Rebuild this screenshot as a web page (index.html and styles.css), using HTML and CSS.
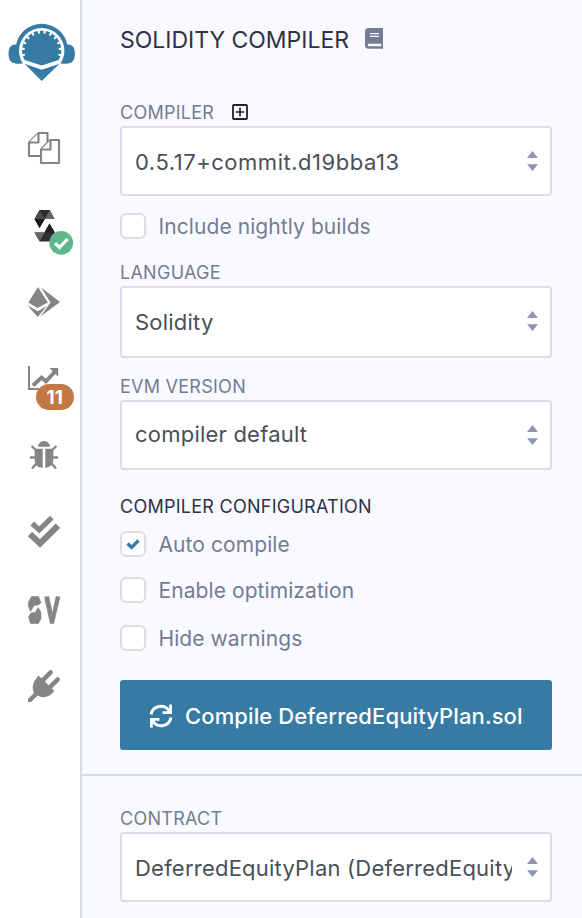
FILE: index.html
```html
<!DOCTYPE html>
<html lang="en">
<head>
<meta charset="utf-8">
<title>Solidity Compiler</title>
<link rel="stylesheet" href="styles.css">
</head>
<body>
<nav class="rail">
  <svg class="logo" viewBox="0 0 80 110">
    <path fill="#357ba3" d="M15.8 46A26.2 26.2 0 0 1 67.6 46V63.5H15.8z"/>
    <path fill="#357ba3" d="M20 44.5h-4.500q-7 0-7 9.300t7 9.700H21zM63.400 44.500h4.500q7 0 7 9.300t-7 9.700H62.400z"/>
    <circle cx="41.700" cy="50.700" r="22.700" fill="#fff"/>
    <path fill="#357ba3" d="M24.700 60A19.600 19.600 0 1 1 58.700 60L41.700 65.500z"/>
    <path class="teeth" d="M23.200 56A19.300 19.300 0 1 1 60.200 56" pathLength="100"/>
    <path fill="#357ba3" d="M24.500 63.800L41.700 69.700L59.500 63.800L41.700 81z"/>
  </svg>
  <svg class="icon" viewBox="0 110 80 77">
    <g fill="#fff" stroke="#858585" stroke-width="2.100" stroke-linejoin="round">
      <path d="M38.500 133h9V156H29V142.500z"/><path d="M38.500 133v9.500H29"/>
      <path d="M50 140H59V163H41V149.500z"/><path d="M50.500 140v9.500H41"/>
    </g>
  </svg>
  <svg class="icon" viewBox="0 187 80 77">
    <path fill="#2c2c2c" d="M39.500 210H49.800L54.500 219H44.800L39.500 228L34.500 219z"/>
    <path fill="#4b4b4b" d="M39.500 210L44.800 219H34.500z"/>
    <path fill="#666" d="M49.800 210L54.500 219H44.800z"/>
    <path fill="#1a1a1a" d="M34.500 219H44.800L39.500 228z"/>
    <path fill="#303030" d="M49.500 223.500L54.800 232.500L49.500 241.500H39.500L34.500 232.500H44.500z"/>
    <path fill="#666" d="M34.500 232.500H44.500L39.500 241.500z"/>
    <path fill="#1f1f1f" d="M49.500 223.500L54.800 232.500H44.500z"/>
    <circle cx="61.200" cy="242.800" r="11.900" fill="#5fb78c"/>
    <path fill="none" stroke="#fff" stroke-width="3.200" d="M55 243.200l4.400 4.300 8.300-8.600"/>
  </svg>
  <svg class="icon" viewBox="0 264 80 77">
    <g fill="#858585">
      <path d="M38 287L47.800 302.500L37.500 308L28.300 302.500z"/>
      <path d="M27.500 305.500L37.700 311.300L47 306L37.700 317z"/>
      <path d="M41 287.500L60 302L40.500 316.500L50.500 302.500z"/>
    </g>
  </svg>
  <svg class="icon" viewBox="0 341 80 77">
    <g fill="none" stroke="#858585">
      <path stroke-width="2" d="M29 366V389H60"/>
      <path stroke-width="3.800" d="M33 385.500l8.500-8 4.500 3.800L55 371.500"/>
    </g>
    <path fill="#858585" d="M49.500 368h8.700v8.700z"/>
    <rect x="36" y="384" width="38" height="26" rx="13" fill="#c17845"/>
    <text class="count" x="54.700" y="404" text-anchor="middle">11</text>
  </svg>
  <svg class="icon" viewBox="0 418 80 77">
    <g fill="#858585">
      <path d="M38 446.800a6 5.800 0 0 1 12 0z"/>
      <path d="M34.700 448.800h8v19.200q-8-1-8-8zM45.300 448.800h8v11q0 7-8 8.200z"/>
    </g>
    <path fill="none" stroke="#858585" stroke-width="2.300" d="M31.500 446l5.500 5M56.500 446l-5.500 5M30 457.500h7M51 457.500h7M37 463l-5 5.500M51 463l5 5.500"/>
  </svg>
  <svg class="icon" viewBox="0 495 80 77">
    <g fill="none" stroke="#858585" stroke-linejoin="miter">
      <path stroke-width="5.200" d="M32.200 523.500l7 6.500L51.800 517.700"/>
      <path stroke-width="6.200" d="M30 534l10 9.500 18-17.700"/>
    </g>
  </svg>
  <svg class="icon" viewBox="0 572 80 77">
    <g fill="#858585" stroke="#858585" stroke-width="0.600">
      <path d="M31.500 596.500h7l2.500 6-2.500 2.500-4.500.5-3.500 6-2-5V602z"/>
      <path d="M30.500 623.500h8l2.500-5v-6l-2.800-5-3 5-4.400.5-2.300 4z"/>
      <path d="M44.500 597l4.300-.5 3.700 17 3.500-17 4 .5-6.300 26.500h-3.400z"/>
    </g>
  </svg>
  <svg class="icon" viewBox="0 649 80 77">
    <path fill="#858585" d="M34.500 681l4-5.500 15.800 15.200q-3.500 5.300-9.500 6.300-4 .7-7-1.500L31 702H28v-3L34 693q-2.800-6 .5-12z"/>
    <g stroke="#858585" stroke-width="4.600" stroke-linecap="round">
      <path d="M43 680.200L50.500 672.500M50.500 686.700L57.600 679.500"/>
    </g>
  </svg>
</nav>
<main class="panel">
  <section class="main-part">
    <h1 class="title"><span>SOLIDITY COMPILER</span>
      <svg class="book" viewBox="0 0 18 21"><path fill="#747c96" d="M3.500 0H18V20.800H3.500Q0 20.500 0 17V3.500Q0 0 3.500 0z"/><path stroke="#f9faff" stroke-width="1.300" d="M5 5.700h9M5 8.400h9"/><path fill="#f9faff" d="M4 15.700h12.200v2.500H4a1.250 1.250 0 0 1 0-2.500z"/></svg>
    </h1>
    <div class="label first"><span>COMPILER</span>
      <svg class="plus" viewBox="0 0 16 16"><rect x="1" y="1" width="14" height="14" rx="1" fill="none" stroke="#222" stroke-width="1.800"/><path stroke="#222" stroke-width="1.700" d="M8 3.700v8.600M3.700 8h8.600"/></svg>
    </div>
    <div class="select low version"><span class="value">0.5.17+commit.d19bba13</span><svg class="arrows" viewBox="0 0 11 20"><path d="M0 7L5.500 0L11 7zM0 13.300H11L5.500 20z"/></svg></div>
    <div class="check nightly"><span class="box"></span><span>Include nightly builds</span></div>
    <div class="label"><span>LANGUAGE</span></div>
    <div class="select tall"><span class="value">Solidity</span><svg class="arrows" viewBox="0 0 11 20"><path d="M0 7L5.500 0L11 7zM0 13.300H11L5.500 20z"/></svg></div>
    <div class="label evm"><span>EVM VERSION</span></div>
    <div class="select high"><span class="value">compiler default</span><svg class="arrows" viewBox="0 0 11 20"><path d="M0 7L5.500 0L11 7zM0 13.300H11L5.500 20z"/></svg></div>
    <h2 class="label config"><span>COMPILER CONFIGURATION</span></h2>
    <div class="check"><span class="box"><svg viewBox="0 0 14 12"><path fill="none" stroke="#357ba3" stroke-width="3.200" d="M1.500 5.500l4 4L12.500 2.500"/></svg></span><span>Auto compile</span></div>
    <div class="check"><span class="box"></span><span>Enable optimization</span></div>
    <div class="check last"><span class="box"></span><span>Hide warnings</span></div>
    <button class="compile"><svg class="sync" viewBox="0 0 24 24"><g fill="none" stroke="#fff" stroke-width="3"><path d="M2 10.500A10 10 0 0 1 20 6.500M22 13.500A10 10 0 0 1 4 17.500"/></g><path fill="#fff" d="M23 0.500V10H13.500V7.200H18L20.200 4.500V0.500zM1 23.500V14h9.500v2.800H6L3.800 19.500v4z"/></svg><span>Compile DeferredEquityPlan.sol</span></button>
  </section>
  <section class="contract">
    <div class="label"><span>CONTRACT</span></div>
    <div class="select low"><span class="value">DeferredEquityPlan (DeferredEquityPlan.sol)</span><svg class="arrows" viewBox="0 0 11 20"><path d="M0 7L5.500 0L11 7zM0 13.300H11L5.500 20z"/></svg></div>
  </section>
</main>
</body>
</html>
```
FILE: styles.css
```css
* { box-sizing: border-box; }
body {
  margin: 0;
  height: 918px;
  display: flex;
  overflow: hidden;
  background: #f9faff;
  font-family: Inter, "Liberation Sans", sans-serif;
}
svg { display: block; flex: none; }
.rail {
  width: 82px;
  flex: none;
  background: #fff;
  border-right: 2px solid #d8dae5;
}
.logo { width: 80px; height: 110px; }
.icon { width: 80px; height: 77px; }
.teeth { fill: none; stroke: #fff; stroke-width: 4.4; stroke-dasharray: 3 5.820; }
.count { font-size: 19px; font-weight: 700; fill: #fff; }
.panel { flex: 1; min-width: 0; }
.main-part {
  height: 776px;
  padding: 0 30px 24px 38px;
  border-bottom: 2px solid #d8dae5;
}
.contract { padding: 28px 30px 0 38px; }
.title {
  margin: 0;
  height: 80px;
  display: flex;
  align-items: center;
  gap: 16px;
  font-size: 23px;
  font-weight: 400;
  letter-spacing: -0.02px;
  color: #2f3148;
  white-space: nowrap;
}
.book { width: 18px; height: 21px; margin-bottom: 3px; }
.label {
  height: 28px;
  display: flex;
  align-items: center;
  font-size: 18px;
  font-weight: 400;
  letter-spacing: 0.26px;
  color: #747c93;
}
.first { margin-top: 18px; gap: 18px; }
.plus { width: 16px; height: 16px; margin-bottom: 1px; }
.evm { margin-top: 14px; }
.config { margin: 22px 0 1px; color: #2f3148; }
.select {
  height: 70px;
  display: flex;
  align-items: center;
  gap: 15px;
  padding: 0 12px 0 13px;
  border: 2px solid #dcdde8;
  border-radius: 4px;
  background: #fff;
  color: #495057;
  font-size: 22px;
  letter-spacing: 0.22px;
}
.version { letter-spacing: 0.53px; }
.tall { height: 72px; }
.tall .arrows { margin-bottom: 2px; }
.value {
  flex: 1;
  min-width: 0;
  overflow: hidden;
  white-space: nowrap;
  line-height: 32px;
}
.low .value { padding-top: 2px; }
.high .value { padding-bottom: 2px; }
.arrows { width: 11px; height: 20px; fill: #8d95b3; }
.check {
  height: 46px;
  display: flex;
  align-items: center;
  gap: 12.5px;
  font-size: 21px;
  letter-spacing: 0.08px;
  color: #747c93;
}
.check > span:last-child { padding-top: 1px; }
.nightly { height: 60px; margin-bottom: 2px; }
.last { height: 50px; }
.box {
  width: 26px;
  height: 26px;
  display: grid;
  place-items: center;
  border: 2px solid #dcdde2;
  border-radius: 6px;
  background: #fff;
}
.box svg { width: 14px; height: 12px; }
.compile {
  width: 100%;
  height: 70px;
  margin: 17px 0 0;
  padding: 2px 0 0 29px;
  display: flex;
  align-items: center;
  gap: 12px;
  border: 0;
  border-radius: 3px;
  background: #357ba3;
  color: #fff;
  font: 500 22px Inter, "Liberation Sans", sans-serif;
  letter-spacing: 0.11px;
  white-space: nowrap;
}
.sync { width: 24px; height: 24px; }
```
